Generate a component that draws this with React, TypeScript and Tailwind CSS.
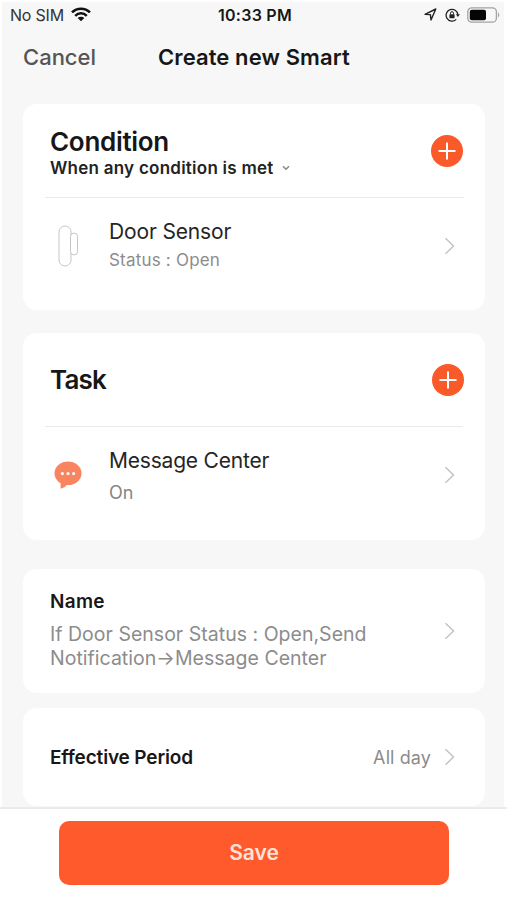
import type { ReactNode } from 'react';

function WifiIcon() {
  return (
    <svg width="20" height="15" viewBox="0 0 20 15" fill="none" stroke="#111" strokeWidth="2.5">
      <path d="M1 5.4C6 .4 14 .4 19 5.4" />
      <path d="M4.2 8.8c3.3-3.3 8.3-3.3 11.6 0" />
      <path d="M10 14.3 6.7 11.1c1.9-1.7 4.7-1.7 6.6 0z" fill="#111" stroke="none" />
    </svg>
  );
}

function LocationIcon() {
  return (
    <svg width="13" height="13" viewBox="0 0 13 13" fill="none" stroke="#222" strokeWidth="1.4" strokeLinejoin="round">
      <path d="M1 6.4 11.8 1 7 12 6.4 6.6z" />
    </svg>
  );
}

function RotationLockIcon() {
  return (
    <svg width="15" height="14" viewBox="0 0 15 14" fill="none" stroke="#222" strokeWidth="1.3">
      <path d="M11.2 11.4A5.9 5.9 0 1 1 12.9 6.6" />
      <path d="M10.9 6.2h4L12.9 9z" fill="#222" stroke="none" />
      <rect x="4.4" y="6.3" width="5.2" height="3.9" rx=".6" fill="#222" stroke="none" />
      <path d="M5.5 6.5V5.2a1.5 1.5 0 0 1 3 0v1.3" strokeWidth="1" />
    </svg>
  );
}

function BatteryIcon() {
  return (
    <svg width="33" height="16" viewBox="0 0 33 16" fill="none">
      <rect x=".8" y=".8" width="28.6" height="14.4" rx="4" stroke="#a3a3a3" strokeWidth="1.3" />
      <rect x="2.8" y="2.8" width="16.2" height="10.4" rx="2" fill="#050505" />
      <path d="M31 5.6c1.6.6 1.6 4.2 0 4.8z" fill="#a3a3a3" />
    </svg>
  );
}

function DoorSensorIcon() {
  return (
    <svg width="22" height="42" viewBox="0 0 22 42" fill="none" stroke="#c6c6c6">
      <rect x="2" y="1" width="12" height="40" rx="6" />
      <rect x="13.5" y="8" width="7" height="22" rx="3.5" fill="#fff" />
    </svg>
  );
}

function MessageIcon() {
  return (
    <svg width="28" height="28" viewBox="0 0 28 28" fill="#f88460">
      <ellipse cx="14" cy="12.3" rx="13.5" ry="11.8" />
      <path d="M5 19.5c1.2 1.100 1.600 2 1.600 3.200v5c2.700-.6 4.900-2 6.400-4.200z" />
      <g fill="#fff">
        <circle cx="8.4" cy="12.6" r="1.6" />
        <circle cx="14" cy="12.6" r="1.6" />
        <circle cx="19.6" cy="12.6" r="1.6" />
      </g>
    </svg>
  );
}

function Chevron() {
  return (
    <svg className="shrink-0" width="11" height="18" viewBox="0 0 11 18" fill="none" stroke="#c4c4c4" strokeWidth="1.5">
      <path d="M1.5 1.2 9.5 9l-8 7.8" />
    </svg>
  );
}

function AddButton({ label }: { label: string }) {
  return (
    <button aria-label={label} className="flex size-8 items-center justify-center rounded-full bg-[#fa5929]">
      <svg width="18" height="18" viewBox="0 0 18 18" stroke="#fff" strokeWidth="2">
        <path d="M9 .5v17M.5 9h17" />
      </svg>
    </button>
  );
}

type DeviceRowProps = {
  icon: ReactNode;
  title: ReactNode;
  status: ReactNode;
};

function DeviceRow({ icon, title, status }: DeviceRowProps) {
  return (
    <div className="flex h-24 items-center pr-[30px] pl-[27px]">
      <div className="flex w-9 justify-center">{icon}</div>
      <div className="ml-[23px] flex-1">
        {title}
        {status}
      </div>
      <Chevron />
    </div>
  );
}

export default function App() {
  return (
    <div className="flex h-[900px] w-[507px] flex-col overflow-hidden bg-white font-['Inter',sans-serif] text-[#171717]">
      <div className="mt-0.5 mr-[3px] ml-0.5 flex min-h-0 flex-1 flex-col overflow-hidden bg-[#f7f7f7]">
        <header>
          <div className="grid h-[25px] grid-cols-3 items-center pr-1 pl-2">
            <div className="flex items-center gap-[7px]">
              <span className="text-[16px] tracking-[-0.2px] text-[#333]">No SIM</span>
              <WifiIcon />
            </div>
            <span className="text-center text-[16px] font-semibold tracking-[0.25px] whitespace-nowrap">10:33 PM</span>
            <div className="flex items-center justify-end">
              <LocationIcon />
              <span className="mr-[7px] ml-2">
                <RotationLockIcon />
              </span>
              <BatteryIcon />
            </div>
          </div>
          <div className="flex h-[61px] items-center pl-[21px]">
            <button className="w-[135px] text-left text-[22px] font-medium text-[#555]">Cancel</button>
            <h1 className="text-[22px] font-semibold tracking-[0.1px] whitespace-nowrap">Create new Smart</h1>
          </div>
        </header>

        <main className="mt-4 ml-[21px] w-[462px]">
          <section className="h-[206px] rounded-[14px] bg-white">
            <div className="flex h-[93px] items-center justify-between pr-[22px] pl-[27px]">
              <div className="pt-1.5">
                <h2 className="text-[26px] leading-7 font-semibold tracking-[-0.3px]">Condition</h2>
                <p className="flex items-center gap-2 text-[17px] leading-6 font-semibold tracking-[0.25px] whitespace-nowrap text-[#222]">
                  <span>When any condition is met</span>
                  <svg width="8" height="6" viewBox="0 0 8 6" fill="none" stroke="#888" strokeWidth="1.5">
                    <path d="m1 1.2 3 3 3-3" />
                  </svg>
                </p>
              </div>
              <AddButton label="Add condition" />
            </div>
            <div className="mr-[21px] ml-[22px] h-px bg-[#e9e9e9]" />
            <DeviceRow
              icon={<DoorSensorIcon />}
              title={<p className="text-[21px] leading-7 tracking-[-0.15px] text-[#252525]">Door Sensor</p>}
              status={<p className="text-[17px] leading-7 tracking-[0.2px] text-[#8c8c8c]">Status : Open</p>}
            />
          </section>

          <section className="mt-[23px] h-[207px] rounded-[14px] bg-white">
            <div className="flex h-[93px] items-center justify-between pr-[21px] pl-[27px]">
              <h2 className="text-[26px] font-semibold tracking-[-0.8px]">Task</h2>
              <AddButton label="Add task" />
            </div>
            <div className="mr-[22px] ml-[22px] h-px bg-[#e9e9e9]" />
            <DeviceRow
              icon={<MessageIcon />}
              title={<p className="pt-1 text-[21px] leading-8 tracking-[-0.2px] text-[#252525]">Message Center</p>}
              status={<p className="text-[18px] leading-8 text-[#858585]">On</p>}
            />
          </section>

          <section className="mt-[29px] flex h-[124px] items-center rounded-[14px] bg-white pr-[30px] pl-[27px]">
            <div className="flex-1 pb-[5px]">
              <h3 className="text-[19px] leading-7 font-semibold tracking-[0.3px]">Name</h3>
              <p className="mt-1.5 text-[19.5px] leading-6 tracking-[0.02px] whitespace-nowrap text-[#8c8c8c]">
                <span className="block">If Door Sensor Status : Open,Send</span>
                <span className="block">Notification→Message Center</span>
              </p>
            </div>
            <Chevron />
          </section>

          <section className="mt-[15px] flex h-[98px] items-center rounded-[14px] bg-white pr-[30px] pl-[27px]">
            <h3 className="flex-1 pt-0.5 text-[19px] font-semibold tracking-[-0.15px]">Effective Period</h3>
            <span className="mr-[13px] text-[18px] tracking-[0.1px] text-[#8c8c8c]">All day</span>
            <Chevron />
          </section>
        </main>
      </div>

      <footer className="h-[93px] border-t-2 border-[#ebebeb] bg-white pt-3 pl-[59px]">
        <button className="h-16 w-[390px] rounded-[10px] bg-[#ff5a2b] text-[21px] font-semibold text-[#ffe3d9]">Save</button>
      </footer>
    </div>
  );
}
